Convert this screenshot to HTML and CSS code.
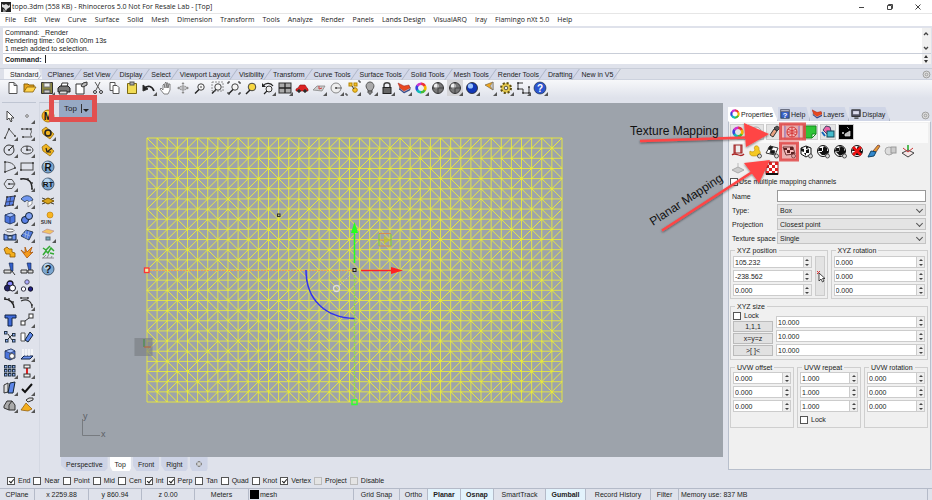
FILE: index.html
```html
<!DOCTYPE html>
<html lang="en">
<head>
<meta charset="utf-8">
<title>topo.3dm (558 KB) - Rhinoceros 5.0 Not For Resale Lab - [Top]</title>
<link rel="stylesheet" href="styles.css">
</head>
<body>
<header class="titlebar">
  <svg class="applogo" viewBox="0 0 10 10"><rect width="10" height="10" fill="#222"/><path d="M1 2l2 1 2-1 3 2 1-2v3L6 7 5 9 3 6 1 5z" fill="#ddd"/><path d="M2 7l2 1 1 2H2z" fill="#888"/></svg>
  <h1>topo.3dm (558 KB) - Rhinoceros 5.0 Not For Resale Lab - [Top]</h1>
  <div class="winbtns">
    <button aria-label="Minimize"><svg viewBox="0 0 8 8"><path d="M1 4.5h5"/></svg></button>
    <button aria-label="Restore"><svg viewBox="0 0 8 8"><path d="M1.500 2.500h4v4h-4zM2.500 2.500v-1h4v4h-1"/></svg></button>
    <button aria-label="Close"><svg viewBox="0 0 8 8"><path d="M1.500 1.500l5 5M6.500 1.500l-5 5"/></svg></button>
  </div>
</header>
<nav class="menubar">
  <a href="#">File</a><a href="#">Edit</a><a href="#">View</a><a href="#">Curve</a><a href="#">Surface</a><a href="#">Solid</a><a href="#">Mesh</a><a href="#">Dimension</a><a href="#">Transform</a><a href="#">Tools</a><a href="#">Analyze</a><a href="#">Render</a><a href="#">Panels</a><a href="#">Lands Design</a><a href="#">VisualARQ</a><a href="#">Iray</a><a href="#">Flamingo nXt 5.0</a><a href="#">Help</a>
</nav>
<section class="command">
  <div class="history">
    <div class="lines"><p>Command: _Render</p><p>Rendering time: 0d 00h 00m 13s</p><p>1 mesh added to selection.</p></div>
    <div class="scroll"><svg viewBox="0 0 8 25"><path d="M2 7l2-2 2 2M2 19l2 2 2-2" fill="none" stroke="#444" stroke-width="1.300"/></svg></div>
  </div>
  <div class="prompt"><label for="cmd">Command:</label><span class="caret"></span><input id="cmd" type="text">
    <div class="scroll"><svg viewBox="0 0 8 10"><path d="M2 4l2-3 2 3zM2 6l2 3 2-3z" fill="#333"/></svg></div>
  </div>
</section>
<nav class="tooltabs">
  <button class="on">Standard</button><button>CPlanes</button><button>Set View</button><button>Display</button><button>Select</button><button>Viewport Layout</button><button>Visibility</button><button>Transform</button><button>Curve Tools</button><button>Surface Tools</button><button>Solid Tools</button><button>Mesh Tools</button><button>Render Tools</button><button>Drafting</button><button>New in V5</button>
  <svg class="cog" viewBox="0 0 10 10"><circle cx="5" cy="5" r="3.800"/><circle cx="5" cy="5" r="1.500"/></svg>
</nav>
<div class="toolbar" data-icons="standard"></div>
<main class="work">
  <aside class="bar main-tools" data-icons="tools"></aside>
  <aside class="bar side-tools" data-icons="side"></aside>
  <section class="center">
    <div class="viewport">
      <div class="vplabel"><span>Top</span><button aria-label="Viewport menu"></button></div>
      <svg class="scene" viewBox="60 103 663 354" preserveAspectRatio="xMidYMid meet">
        <path id="grid" fill="none" stroke="#eeee35" stroke-width="1" stroke-opacity=".85"/>
        <path id="diagonals" fill="none" stroke="#f2f22c" stroke-width="1" stroke-opacity=".9"/>
        <rect x="134.500" y="338" width="18" height="18" fill="#777b80" fill-opacity=".6"/>
        <path d="M144 339v8" stroke="#3a8f3a"/><path d="M144 347h7" stroke="#c06030"/>
        <path d="M147 270.500h207" stroke="#f0a050" stroke-dasharray="2 1" stroke-width="1"/>
        <path d="M354.500 275v125" stroke="#8fdc50" stroke-width="1.300" stroke-dasharray="3 1"/>
        <path d="M354.500 263v-32" stroke="#2f2" stroke-width="1.500"/><path d="M354.500 222l3.500 11h-7z" fill="#2f2"/>
        <path d="M361 270.500h32" stroke="#f22" stroke-width="1.500"/><path d="M403 270.500l-12-3.500v7z" fill="#f22"/>
        <path d="M306 270c0 30 20 48 48.500 48.500" fill="none" stroke="#3232ee" stroke-width="1.500"/>
        <circle cx="336.500" cy="288.500" r="3" fill="none" stroke="#ddd" stroke-width="1.300"/>
        <path d="M340 285l11-11" stroke="#ccc" stroke-dasharray="2 2" stroke-width=".7"/>
        <rect x="353" y="268.500" width="3" height="3" fill="#bbb" stroke="#222"/>
        <rect x="277.500" y="214" width="2.500" height="2.500" fill="#bb9" stroke="#332"/>
        <rect x="144.500" y="268" width="4.500" height="4.500" fill="#eea" stroke="#f33" stroke-width="1.300"/>
        <rect x="352" y="400" width="5" height="4.500" fill="none" stroke="#3f3" stroke-width="1.500"/>
        <path d="M379 234v12M391 234v12" stroke="#88c850" stroke-width="1.500"/><path d="M379 233.500h12M379 246h12M379 240h12" stroke="#d88a50"/><path d="M384 236l6 4-6 4z" fill="#bcc040"/>
        <path d="M82.500 419v16.500H100" fill="none" stroke="#777b80"/>
        <text x="83" y="419">y</text><text x="101" y="437">x</text>
      </svg>
    </div>
    <nav class="vptabs"><button>Perspective</button><button class="on">Top</button><button>Front</button><button>Right</button><button aria-label="New viewport"><svg viewBox="0 0 8 8"><path d="M4 1v6M1 4h6" stroke="#888" stroke-width="2.500"/><path d="M4 2v4M2 4h4" stroke="#eee"/></svg></button></nav>
  </section>
  <aside class="panel">
    <nav class="ptabs" id="ptabs">
      <button class="on" data-glyph="wheel">Properties</button><button data-glyph="helpbook">Help</button><button data-glyph="layers">Layers</button><button data-glyph="monitor">Display</button>
      <svg class="cog" viewBox="0 0 10 10"><circle cx="5" cy="5" r="3.800"/><circle cx="5" cy="5" r="1.500"/></svg>
    </nav>
    <form class="props">
      <div class="pages" data-icons="pages"></div>
      <div class="maps" data-icons="maps"></div>
      <label class="check multi"><input type="checkbox">Use multiple mapping channels</label>
      <div class="fields">
        <label for="name">Name</label><input id="name" type="text">
        <label for="type">Type:</label><span class="drop"><select id="type"><option>Box</option></select></span>
        <label for="proj">Projection</label><span class="drop"><select id="proj"><option>Closest point</option></select></span>
        <label for="space">Texture space</label><span class="drop"><select id="space"><option>Single</option></select></span>
      </div>
      <div class="two">
        <fieldset><legend>XYZ position</legend>
          <div class="withpick">
            <div class="stack"><span class="spin"><input aria-label="Position X" value="105.232"></span><span class="spin"><input aria-label="Position Y" value="-238.562"></span><span class="spin"><input aria-label="Position Z" value="0.000"></span></div>
            <button type="button" class="pick" aria-label="Pick position"><svg viewBox="0 0 10 12"><path d="M1 1l3 3M4 1L1 4" stroke="#d33"/><path d="M3 3v8l2-2 1.500 3 1.500-1-1.500-2.500H9z" fill="#fff" stroke="#222" stroke-width=".8"/></svg></button>
          </div>
        </fieldset>
        <fieldset><legend>XYZ rotation</legend>
          <div class="stack"><span class="spin"><input aria-label="Rotation X" value="0.000"></span><span class="spin"><input aria-label="Rotation Y" value="0.000"></span><span class="spin"><input aria-label="Rotation Z" value="0.000"></span></div>
        </fieldset>
      </div>
      <fieldset class="size"><legend>XYZ size</legend>
        <div class="presets"><label class="check"><input type="checkbox">Lock</label><button type="button">1,1,1</button><button type="button">x=y=z</button><button type="button">&gt;[ ]&lt;</button></div>
        <div class="stack"><span class="spin"><input aria-label="Size X" value="10.000"></span><span class="spin"><input aria-label="Size Y" value="10.000"></span><span class="spin"><input aria-label="Size Z" value="10.000"></span></div>
      </fieldset>
      <div class="three">
        <fieldset><legend>UVW offset</legend>
          <div class="stack"><span class="spin"><input aria-label="Offset U" value="0.000"></span><span class="spin"><input aria-label="Offset V" value="0.000"></span><span class="spin"><input aria-label="Offset W" value="0.000"></span></div>
        </fieldset>
        <fieldset><legend>UVW repeat</legend>
          <div class="stack"><span class="spin"><input aria-label="Repeat U" value="1.000"></span><span class="spin"><input aria-label="Repeat V" value="1.000"></span><span class="spin"><input aria-label="Repeat W" value="1.000"></span></div>
          <label class="check"><input type="checkbox">Lock</label>
        </fieldset>
        <fieldset><legend>UVW rotation</legend>
          <div class="stack"><span class="spin"><input aria-label="Rotation U" value="0.000"></span><span class="spin"><input aria-label="Rotation V" value="0.000"></span><span class="spin"><input aria-label="Rotation W" value="0.000"></span></div>
        </fieldset>
      </div>
    </form>
  </aside>
  <svg class="callouts" viewBox="620 98 312 140">
    <defs><filter id="sh" x="-10%" y="-10%" width="120%" height="130%"><feDropShadow dx="0" dy="1" stdDeviation="1" flood-opacity=".5"/></filter></defs>
    <g fill="#e23b3b" fill-opacity=".35" stroke="#e04848" stroke-opacity=".85" stroke-width="3"><rect x="780.500" y="124" width="24" height="15"/><rect x="780.500" y="143" width="17" height="17"/></g>
    <g fill="#ff4545" stroke="#ff4545" filter="url(#sh)"><path d="M640 141l106-3.500" stroke-width="2.500"/><path d="M744 123l25 11-23 13z" stroke="none"/><path d="M662 230.500l91-59" stroke-width="2.500"/><path d="M744 163l26-3-11 23z" stroke="none"/></g>
    <text x="630" y="135">Texture Mapping</text>
    <text transform="translate(653 226) rotate(-33)">Planar Mapping</text>
  </svg>
</main>
<div class="osnap">
  <label class="check"><input type="checkbox" checked>End</label><label class="check"><input type="checkbox">Near</label><label class="check"><input type="checkbox">Point</label><label class="check"><input type="checkbox">Mid</label><label class="check"><input type="checkbox">Cen</label><label class="check"><input type="checkbox" checked>Int</label><label class="check"><input type="checkbox" checked>Perp</label><label class="check"><input type="checkbox">Tan</label><label class="check"><input type="checkbox">Quad</label><label class="check"><input type="checkbox">Knot</label><label class="check"><input type="checkbox" checked>Vertex</label><label class="check"><input type="checkbox" disabled>Project</label><label class="check"><input type="checkbox" disabled>Disable</label>
</div>
<footer class="status">
  <span>CPlane</span><span>x 2259.88</span><span>y 860.94</span><span>z 0.00</span><span>Meters</span><span class="layer"><i></i>mesh</span><button>Grid Snap</button><button>Ortho</button><button class="on">Planar</button><button class="on">Osnap</button><button>SmartTrack</button><button class="on">Gumball</button><button>Record History</button><button>Filter</button><span class="mem">Memory use: 837 MB</span>
</footer>
<script src="app.js"></script>
</body>
</html>
```
FILE: styles.css
```css
* { box-sizing: border-box; }
body { margin: 0; min-height: 100vh; display: flex; flex-direction: column; background: #dfe2eb; color: #222; font: 7px/9px "Liberation Sans", Arial, sans-serif; overflow: hidden; }
button, input, select { font: inherit; color: inherit; margin: 0; padding: 0; border: 0; background: none; border-radius: 0; outline: 0; }
svg { display: block; }
p, h1 { margin: 0; font-weight: normal; }

.titlebar { display: flex; align-items: center; height: 14px; background: #fff; border-bottom: 1px solid #e6e6e6; }
.applogo { width: 10px; height: 10px; margin: 0 1px 0 1px; }
.titlebar h1 { font: 7px/12px "Open Sans", sans-serif; flex: 1; }
.winbtns { display: flex; gap: 20px; padding-right: 10px; }
.winbtns svg { width: 8px; height: 8px; fill: none; stroke: #444; stroke-width: 1; }
.menubar { display: flex; gap: 8px; height: 12px; padding-left: 5px; background: #fff; font: 7px/12px "Open Sans", sans-serif; }
.menubar a { color: #222; text-decoration: none; white-space: nowrap; }

.command { margin: 2px 1px 4px 3px; }
.history { display: flex; background: #fff; border-bottom: 1px solid #c9ced8; }
.lines { flex: 1; padding: 1px 2px 0; line-height: 8px; }
.scroll { width: 9px; background: #f0f0f0; }
.scroll svg { width: 8px; }
.prompt { display: flex; align-items: center; height: 10px; background: #fff; padding-left: 2px; font-weight: bold; }
.prompt input { flex: 1; min-width: 0; }
.caret { width: 1px; height: 8px; margin-left: 3px; background: #222; }

.tooltabs { display: flex; height: 12px; padding-left: 4px; background: #dde0e9; border-top: 1px solid #c8cdd8; border-bottom: 1px solid #cdd2de; }
.tooltabs button { position: relative; background: #d3d8e9; padding: 0 4px 0 5px; white-space: nowrap; }
.tooltabs button::after { content: ""; position: absolute; z-index: 1; right: 0; top: 0; width: 1px; height: 11px; background: #aeb5c6; transform: skewX(-35deg); }
.tooltabs .on { background: #f6f7fa; padding-left: 6px; clip-path: polygon(0 0, 90% 0, 100% 100%, 0 100%); }
.cog { width: 9px; height: 9px; margin: 1px 1px 0 auto; fill: #ddd; stroke: #999; }

.ico { position: relative; width: 16px; height: 16px; flex: none; }
.ico svg { width: 16px; height: 16px; padding: 2px; overflow: visible; }
.ico.fly::after { content: ""; position: absolute; right: 0; bottom: 0; border: 2px solid; border-color: transparent #555 #555 transparent; }
.ico.hot { background: #d5d5d8; }
.toolbar { display: flex; gap: 1px; height: 18px; padding: 0 5px; background: linear-gradient(#f7f8fa, #dfe2eb); }

.work { position: relative; flex: 1; display: flex; }
.bar { align-content: start; display: grid; gap: 1px; padding-top: 5px; margin-top: 4px; border-top: 1px solid #bfc5d2; }
.main-tools { grid-template-columns: 16px 16px; width: 34px; margin-left: 2px; }
.side-tools { grid-template-columns: 16px; margin-left: 3px; padding-right: 4px; }
.side-tools { border-left: 1px solid #d4d8e2; }
.center { flex: 1; min-width: 0; display: flex; flex-direction: column; padding: 5px 0 2px; }
.viewport { position: relative; flex: 1; background: #9da3ab; }
.scene { position: absolute; inset: 0; width: 100%; height: 100%; }
.scene text { font: 9px "Liberation Sans", sans-serif; fill: #5c6066; }
.vplabel { position: absolute; z-index: 1; left: -11px; top: -8px; display: flex; gap: 4px; border: 5px solid #e2504f; background: linear-gradient(90deg, transparent 5px, #97a9c4 5px); font-size: 8px; line-height: 9px; padding: 4px 3px 4px 10px; }
.vplabel button { width: 8px; border-left: 1px solid #333; padding: 3px 0 0 1px; }
.vplabel button::after { content: ""; display: block; border: 3px solid transparent; border-top-color: #222; border-bottom: 0; }
.vptabs { display: flex; gap: 2px; height: 14px; margin-left: 1px; }
.vptabs button { background: #ced4e6; padding: 0 5px; clip-path: polygon(0 0, 100% 0, 100% 80%, 94% 100%, 14% 100%, 0 60%); }
.vptabs .on { background: #fff; }
.vptabs svg { width: 8px; }

.panel { display: flex; flex-direction: column; width: 209px; padding: 9px 1px 3px 5px; }
.ptabs { display: flex; height: 14px; }
.ptabs button { display: flex; align-items: center; gap: 1px; padding: 0 4px 0 2px; background: #cfd5e6; border-right: 1px solid #aeb5c6; clip-path: polygon(0 0, 88% 0, 100% 100%, 0 100%); }
.ptabs .on { background: #fff; }
.ptabs button svg { width: 10px; height: 10px; }
.ptabs .cog { margin-top: 4px; }
.props { flex: 1; background: #f0f0f0; border: 1px solid #b8bfcc; border-top-color: #fff; padding: 1px 2px 0 1px; }
.pages { display: flex; gap: 2px; height: 20px; padding-top: 1px; background: #fafafa; }
.pages .ico { border: 1px solid #ccc; background: #e4e4e4; }
.pages .ico svg { width: 14px; height: 14px; padding: 1px; }
.maps { display: grid; grid-template-columns: repeat(11, 16px); gap: 1px; }
.check { display: flex; align-items: center; gap: 3px; white-space: nowrap; }
.check input { appearance: none; width: 8px; height: 8px; background: #fff; border: 1px solid #555; position: relative; }
.check input:checked::after { content: ""; position: absolute; left: 2px; top: 0; width: 2px; height: 4px; border: solid #222; border-width: 0 1px 1px 0; transform: rotate(40deg); }
.check input:disabled { background: #e4e4e4; border-color: #bbb; }
.multi { padding-top: 1px; gap: 1px; }
.fields { display: grid; grid-template-columns: 45px 1fr; gap: 2px 0; padding: 4px 2px 0 2px; align-items: center; }
.fields > input, .drop, .fields select { height: 12px; width: 100%; }
.fields > input { background: #fff; border: 1px solid #999; }
.drop { position: relative; display: block; }
.drop select { display: block; appearance: none; background: #e4e4e4; border: 1px solid #c4c4c4; padding: 0 2px; }
.drop::after { content: ""; position: absolute; right: 4px; top: 3px; width: 4px; height: 4px; border: solid #555; border-width: 0 1px 1px 0; transform: rotate(45deg); }
fieldset { margin: 0; min-width: 0; padding: 0 2px 2px; border: 1px solid #cfcfcf; }
legend { padding: 0 2px; margin-left: 2px; line-height: 9px; white-space: nowrap; }
.two, .three { display: grid; gap: 3px; grid-template-columns: 1fr 1fr; }
.two { margin-top: 2px; }
.three { grid-template-columns: repeat(3, 1fr); }
.stack { display: grid; gap: 2px; flex: 1; min-width: 0; }
.spin { display: grid; grid-template: 5px 5px / 1fr 8px; background: #fff; border: 1px solid #ccc; height: 12px; }
.spin input { grid-row: 1 / 3; width: 100%; min-width: 0; padding-left: 1px; height: 10px; }
.spin button { background: #eee; border-left: 1px solid #ccc; display: grid; place-items: center; }
.spin button::after { content: ""; border: 2px solid transparent; border-top: 0; border-bottom-color: #444; }
.spin button:last-child::after { transform: scaleY(-1); }
.withpick { display: flex; gap: 3px; }
.pick { width: 10px; background: #e3e3e3; border: 1px solid #ccc; display: grid; align-items: center; }
.pick svg { width: 10px; height: 12px; overflow: visible; }
.two fieldset { padding-top: 1px; }
.size { display: flex; gap: 3px; margin: 3px 0; padding-bottom: 3px; }
.size .stack { padding-top: 5px; }
.presets { display: grid; gap: 1px; width: 40px; }
.presets button { background: #e1e1e1; border: 1px solid #bbb; height: 11px; line-height: 9px; }
.three .check { padding: 3px 0 1px; }
.callouts { position: absolute; right: 0; top: 0; width: 312px; height: 140px; pointer-events: none; z-index: 2; overflow: visible; }
.callouts text { font: 12px "Liberation Sans", sans-serif; fill: #111; }

.osnap { display: flex; gap: 3px; height: 15px; padding-left: 7px; align-items: center; }
.status { display: grid; grid-template-columns: 35px 54px 53px 53px 54px 105px 46px 28px 33px 33px 52px 40px 65px 28px 1fr; height: 12px; border-top: 1px solid #b4bac8; line-height: 11px; text-align: center; }
.status > * { border-right: 1px solid #b4bac8; white-space: nowrap; }
.status .on { background: #e3f3fc; font-weight: bold; }
.status .layer { display: flex; align-items: center; gap: 1px; padding-left: 1px; }
.layer i { width: 9px; height: 9px; background: #000; }
.status .mem { text-align: left; padding-left: 2px; margin-right: 4px; }
```
FILE: app.js
```js
const P = (d, fill = 'none', stroke = '#333', w = 1) => `<path d="${d}" fill="${fill}" stroke="${stroke}" stroke-width="${w}"/>`;
const C = (x, y, r, fill = 'none', stroke = '#333', w = 1) => `<circle cx="${x}" cy="${y}" r="${r}" fill="${fill}" stroke="${stroke}" stroke-width="${w}"/>`;
const R = (x, y, w, h, fill = 'none', stroke = '#333') => `<rect x="${x}" y="${y}" width="${w}" height="${h}" fill="${fill}" stroke="${stroke}"/>`;
const T = (x, y, s, size, fill = '#111') => `<text x="${x}" y="${y}" font-size="${size}" font-weight="bold" text-anchor="middle" fill="${fill}" font-family="Liberation Sans">${s}</text>`;
const dots = (list, fill = '#333') => list.map(([x, y]) => C(x, y, .9, fill, 'none')).join('');

// Six coloured arcs that close into a ring.
const wheel = ['#e33', '#f7b500', '#4b3', '#1bb', '#34d', '#c3c'].map((c, i) =>
  `<circle cx="6" cy="6" r="4.300" fill="none" stroke="${c}" stroke-width="2.600" stroke-dasharray="4.700 40" transform="rotate(${i * 60 - 90} 6 6)"/>`).join('');
const layers = P('M1 7l5 4 6-3V5z', '#24c', '#124', .5) + P('M1 6l5 4 6-3V5z', '#fff', '#444', .5) + P('M0 1l2 5 4 3 6-3-1-3-5 1z', '#e8481f', '#922', .5);
const lens = (extra = '') => C(7, 5, 3.2, '#f4f4f4', '#444') + P('M5 7.500l-4 4', 'none', '#222', 1.500) + extra;
const coin = s => C(6, 6, 6, '#f4b51c', '#9a6a00', .8) + C(5, 4, 3, '#ffe06a', 'none') + s;
const blue = s => C(6, 6, 6, '#7aa5cf', '#345', .8) + C(5, 3.500, 3, '#b9d6ef', 'none') + s;
const tag = s => P('M0 3l4-3 8 7-4 5-7-5z', '#f0b420', '#8a6200', .7) + s;
const sphere = (a, b) => C(6, 6, 5.5, b, '#222', .8) + C(4.500, 4, 2.600, a, 'none');
const checks = (c = '#111') => {
  let s = '';
  for (let i = 0; i < 4; i++) for (let j = 0; j < 4; j++) if ((i + j) % 2) s += `<rect x="${i * 3}" y="${j * 3}" width="3" height="3" fill="${c}"/>`;
  return s;
};
const ball = c => `<g>${C(6, 6, 5.500, '#fff', c, 1)}${P('M2 3h3v3H1zM7 1l3 2v3H6V3zM5 6h3v4H5zM8 6h3v2L8 10zM2 7l3 0v3z', c, 'none')}</g>`;
const lensSmall = C(10.500, 11, 2, '#ddd', '#333', .8);
const box = P('M1 3l6-2 4 2v7l-5 2-5-2z', '#4b74dd', '#124', .7) + P('M1 3l5 2 5-2-4-2z', '#a9c4ff', '#124', .6) + P('M6 5v7', 'none', '#124', .6);
const cell = (x, y) => R(x + .5, y + .5, 2.500, 2.500, '#8fb0f5', '#234');

const sets = {
  standard: [
    ['New', P('M2 .5h5l3 3v8H2zM7 .5v3h3', '#fff', '#555')],
    ['Open', P('M0 10V2h4l1 1h5v2', '#e8a51c', '#85600a') + P('M0 10l3-5h9l-3 5z', '#ffd44d', '#85600a', .8)],
    ['Save', P('M.5.5h11v11H.5z', '#8c8740', '#333') + R(3, 1, 6, 4, '#eee', '#777') + R(3, 8, 6, 3, '#ccc', '#555'), 1],
    ['Print', P('M3 5l1-4h6L9 5', '#fff') + P('M0 6l2-2h8l2 2v4H0z', '#777', '#222') + P('M2 9h7v3H1z', '#ddd')],
    ['Document properties', P('M1 2h8v10H1z', '#fff') + P('M6 4l2-3 4-1v3L8 5z', '#bbb')],
    ['Cut', P('M3 0l5 8M8 0L4 8', 'none', '#555') + C(3, 10, 1.5) + C(9, 10, 1.5)],
    ['Copy', P('M1 .5h5v8H1z', '#fff', '#555') + P('M4 3.500h4l2 2v6H4z', '#fff', '#555')],
    ['Paste', P('M1.500 1.500h9v10h-9z', '#f1dc55', '#7d6a12') + R(4, 0, 4, 3, '#aaa', '#555')],
    ['Undo', P('M2 6c3-3 7-2 9 3', 'none', '#222', 1.800) + P('M0 3v6l5-2z', '#222'), 1],
    ['Pan', P('M4 12L0 7l1-1 2 2V3l1-1 1 4V1l1-1 1 6V1l1 0 0 5 1-4 1 0v6l-2 4z', '#fff', '#666', .8)],
    ['Rotate view', P('M6 1v10M1 6h10', 'none', '#888', .8) + '<ellipse cx="6" cy="6" rx="4" ry="2" fill="none" stroke="#888" stroke-width=".8"/>' + P('M6 0l1.500 2h-3zM6 12l1.500-2h-3zM12 6l-2-1.500v3zM0 6l2-1.500v3z', '#888', 'none')],
    ['Zoom', lens(P('M7 4v2', 'none', '#444'))],
    ['Zoom window', lens() + '<rect x="1" y="0" width="11" height="9" fill="none" stroke="#777" stroke-width=".8" stroke-dasharray="2 1"/>'],
    ['Zoom extents', lens() + P('M0 2V0h2M10 0h2v2M12 10v2h-2M2 12H0v-2', 'none', '#222')],
    ['Zoom selected', C(7, 5, 3.800, '#f7d742', '#444') + P('M5 8l-4 4', 'none', '#222', 1.500)],
    ['Undo view', C(7, 7, 3, '#eee') + P('M5 9l-3 3M1 4c3-4 8-3 10 0', 'none', '#222', 1.200) + P('M0 1v4h4z', '#222', 'none'), 1],
    ['Four viewports', R(0, 1, 12, 10, '#aaa') + P('M6 1v10M0 6h12', 'none', '#222', 1.300), 1],
    ['Right view', P('M0 7l2-1 2-3h5l2 3 1 1v2H0z', '#d22', '#811', .6) + C(3, 9, 1.300, '#222') + C(9, 9, 1.300, '#222')],
    ['Construction plane', P('M0 8l4-4h8l-3 5z', '#ccc', '#888', .8) + P('M6 7l3-1M6 7V4', 'none', '#c44'), 1],
    ['Object snap', C(6, 6, 5, '#eee', '#888') + P('M6 6h6', 'none', '#666') + dots([[6, 6]]), 1],
    ['Select', R(2, 1, 3, 3, '#f7c22c', '#b58500') + R(7, 1, 3, 3, '#f7c22c', '#b58500') + C(8, 8, 2.300, '#f7c22c', '#b58500') + P('M11 -1h2v2M1 13h-2v-2M5 4l2 3', 'none', '#333'), 1],
    ['Hide', P('M4 8C0 4 3 0 6 0s6 4 2 8v3H4z', '#aaa', '#555') + P('M4 9h4M5 12h2', 'none', '#333'), 1],
    ['Lock', P('M3 6V3c0-3 6-3 6 0v3', 'none', '#444', 1.500) + R(2, 5.500, 8, 6, '#666', '#222'), 1],
    ['Layers', layers, 1], ['Properties', wheel, 1],
    ['Wireframe', sphere('#eee', '#777') + P('M6 0v12M0 6h12', 'none', '#222', .6)],
    ['Shaded', sphere('#eee', '#777') + P('M6 0v12M0 6h12', 'none', '#222', .6), 1, 'hot'],
    ['Render', sphere('#9cc4ff', '#1238b8'), 1],
    ['Spotlight', P('M2 3l8-3v8z', '#f3a81d', '#764', .7) + P('M10 0v8L7 4z', '#ccc', '#666', .5), 1],
    ['Options', '<circle cx="6" cy="6" r="4.800" fill="#e0c23a" stroke="#5f5010" stroke-width="2.400" stroke-dasharray="2 1.770"/>' + C(6, 6, 3.800, '#e8cc50', 'none') + C(6, 6, 1.800, '#eee', '#554'), 1],
    ['Dimension', P('M1 1h5M1 1v6h5v4h6V5', 'none', '#333', 1) + dots([[1, 1], [1, 7], [6, 11], [12, 11], [12, 5]]), 1],
    ['Help', C(6, 6, 6, '#2c55cf', '#123', .6) + T(6, 10, '?', 10, '#fff'), 1]
  ],
  tools: [
    ['Cancel', P('M3 1v9l2-2 2 4 1-1-1-3h3z', '#fff', '#444')], ['Point', C(6, 6, 1.300, '#fff', '#555', .8), 1],
    ['Polyline', P('M1 11L5 2l6 7', 'none', '#555') + dots([[1, 11], [5, 2], [11, 9]]), 1], ['Curve', P('M1 2h8c4 4-2 4 2 8H2', 'none', '#555') + dots([[1, 2], [6, 2], [10, 2], [2, 10]]), 1],
    ['Circle', C(5, 6, 5) + P('M5 6l4-4') + dots([[5, 6], [9, 2]]), 1], ['Ellipse', '<ellipse cx="6" cy="6" rx="6" ry="4" fill="none" stroke="#444"/>' + P('M6 6V2M6 6h4') + dots([[6, 6]]), 1],
    ['Arc', P('M1 1c8 0 10 4 10 6L1 11z', 'none', '#555') + dots([[1, 1], [1, 11], [11, 7]]), 1], ['Rectangle', R(0, 2, 12, 7, 'none', '#444') + dots([[0, 9], [12, 2]]), 1],
    ['Polygon', P('M3 1.500h5L11 6 8 10.500H3L0 6z', 'none', '#555') + P('M5 6h5') + dots([[5, 6]]), 1], ['Fillet', P('M0 1c8-1 11 3 11 10', 'none', '#222', 1.500) + dots([[0, 1], [7, 1], [11, 5], [11, 11]]), 1],
    ['Surface', P('M3 2l8-1-2 9-8 1z', '#5b82e8', '#223', .8) + P('M7 1L5 11M2 7l8-1', 'none', '#223', .6) + dots([[3, 2], [11, 1], [9, 10], [1, 11]]), 1], ['Revolve', P('M0 4c4-5 10-4 12 1L8 7C7 5 5 5 4 7z', '#6f96ef', '#234', .8) + P('M7 7v5l4-3V6', '#fff', '#555', .6), 1],
    ['Box', box, 1], ['Boolean', C(4, 8, 3.500, '#5a80e6', '#123') + C(8, 4, 3.500, '#7ea0f2', '#123'), 1],
    ['Project', '<ellipse cx="6" cy="1.500" rx="4" ry="1.500" fill="#fff" stroke="#666"/>' + P('M0 5c4 2 8 2 12 0v6H0z', '#6d93ee', '#124') + R(4, 7, 4, 3, '#cde', '#234'), 1], ['Mesh', P('M0 7l5-6 7 2-4 8z', '#4f78dd', '#123', .8) + P('M2 4l7 3M5 1L4 9M8 2L6 10', 'none', '#bcd', .6), 1],
    ['Join', P('M0 3l3-2 2 2 3 0v3l3 1 0 4H6V8H2z', '#f3ae1e', '#8a5500', .8)], ['Explode', P('M6 12L0 4l4 3V1l2 5 5-5-2 6 3-1z', '#f49a1c', '#a34b00', .7)],
    ['Trim', P('M5 0h4v8H7z', '#335fcb', '#124', .6) + P('M0 7h7v3H0zM8 8l3 4', '#ddd', '#333')], ['Split', P('M6 0h4v8H8z', '#335fcb', '#124', .6) + P('M0 7h6v3H0zM7 7h5v3H7z', '#ddd', '#333')],
    ['Group', C(6, 4, 3, '#88f', '#112', 1.300) + C(3.500, 8, 3, '#226', '#112') + C(8.500, 8, 3, '#fff', '#112'), 1], ['Ungroup', C(6, 2, 2.200, '#aaf', '#556') + C(2.500, 9, 2.200, '#fff', '#334') + C(9.500, 9, 2.200, '#228', '#112')],
    ['Edit points', P('M0 2c6 0 10 4 10 9', 'none', '#222', 1.500) + dots([[1, 1], [5, 2], [9, 5]])], ['Curve tools', P('M0 4c7-3 11 1 11 7M0 1h7', 'none', '#333', 1.200) + dots([[0, 1], [7, 1], [11, 8]]), 1],
    ['Text', P('M1 1h11v3H8v8H4V4H1z', '#3f6ad8', '#124')], ['Move', R(0, 7, 4, 4, '#fff') + R(8, 0, 4, 4, '#fff') + P('M4 7l4-3'), 1],
    ['Copy objects', cell(0, 0) + cell(8, 2) + cell(1, 8) + cell(8, 8) + P('M4 3l4 6M8 4L4 8')], ['Rotate', P('M0 2h4v8H0z', '#fff', '#555') + P('M9 1l3 3-5 7-3-2z', '#5d86e8', '#123')],
    ['Solid tools', box + C(8, 8, 2.500, '#fff', '#555')], ['Extrude', P('M0 11l3-3h9l-3 3z', '#6d93ee', '#124') + P('M2 8V1M5 8V1M8 8V1M11 7V1', 'none', '#fff', 1.200), 1],
    ['Array', [0, 4, 8].map(x => [0, 4, 8].map(y => cell(x, y)).join('')).join(''), 1], ['Align', P('M6 0v12', 'none', '#d22', 2) + R(3, 0, 6, 3, '#eee') + R(3, 9, 6, 3, '#eee'), 1],
    ['Analyze', P('M0 3l4-2v9l-4 1z', '#ddd', '#333') + P('M6 1l5-1-2 11H4z', '#5d86e8', '#123'), 1], ['Check', P('M1 7l3 3 7-8', 'none', '#111', 2), 1],
    ['Block', P('M0 7l3-5 5 0 3 4v5H5l-5-2z', '#aaa', '#333') + P('M5 11V6l3-4', 'none', '#333'), 1], ['Render tools', P('M0 11l5-7 6 6-4 2z', '#f3ae1e', '#8a5500', .7) + P('M5 1l3-2 4 0v2L7 3z', '#ddd', '#333'), 1]
  ],
  side: [
    ['Materials', coin(T(6, 10, 'M', 10))], ['Tag ring', tag(C(6, 6, 3, 'none', '#222', 1.600)), 1], ['Tag arrow', tag(P('M4 4l1 4h4M5 8l5-4', 'none', '#222', 1.200))],
    ['Render', blue(T(6, 10, 'R', 10))], ['Real time', blue(T(6, 9, 'RT', 8))],
    ['Sky', P('M0 6l6-3 6 3-6 3z', '#d9a51e', '#7a5500') + P('M0 3l3 1M12 3L9 4M0 9l3-1M12 9L9 8', 'none', '#444')],
    ['Sun', C(8, 3, 3, '#f9b420', '#b87900', .6) + T(4, 12, 'SUN', 5, '#333')],
    ['Ground', P('M0 3l5-3 7 2-4 3z', '#f2c464', '#a78', .5) + R(4, 8, 4, 3, '#7ab', '#567'), 1],
    ['Plants', P('M1 9l3-4 2 2 3-5 3 3M1 2l3 2 4-4M8 7l4 1', 'none', '#3a3', 1.500) + P('M1 12l3-3M5 12l2-4M9 12l1-2M0 12h12', 'none', '#777', .8)], ['Help', blue(T(6, 10, '?', 11))]
  ],
  pages: [
    ['Object', wheel], ['Material', C(6, 6, 5, '#f8f8f8', '#aaa')], ['Spotlight', P('M2 9l4-6 3 2-4 6z', '#e8a080', '#333') + P('M6 2l3-2 3 2-3 3z', '#555', '#333')],
    ['Texture mapping', P('M-1 0v12M13 0v12', 'none', '#8af', 1.500) + C(6, 6, 5, '#fff', '#c33') + P('M6 1v10M1 6h10M2 3c3 2 5 2 8 0M2 9c3-2 5-2 8 0', 'none', '#c33')],
    ['Ground', P('M0 0h12v8l-4 4H0z', '#2fc437', '#178a1e') + P('M12 8l-4 4V8z', '#fff', '#178a1e')],
    ['Decals', P('M1 4l3-4 4 1 1 4-4 3z', '#e6a', '#446') + R(5, 5, 7, 6, '#4bc', '#145') + P('M0 6l3 4', 'none', '#16b', 2)],
    ['Thickness', '<rect x="-1" y="-1" width="14" height="14" fill="#000"/>' + P('M5 8l5-3v5H5zM7 1l2 2', '#bbb', '#ddd', .7) + C(3, 7, 1, '#ddd', 'none')]
  ],
  maps: [
    ['Unwrap', R(2, 0, 8, 8, '#eee', '#922') + P('M0 10c4-4 8 4 12-1M3 0v8M9 0v8', 'none', '#a22', 1.300)],
    ['Duck', P('M1 6c3 2 4 0 5-1-3-5 5-6 4 0 4 5-2 6-5 6S0 10 1 6z', '#f5c823', '#b98a00', .6) + lensSmall],
    ['Surface mapping', P('M0 8l4-7 8 2-3 7z', '#fff') + P('M4 1l3 1-2 3-3-1zM5 5l4 1-1 3-4-1z', '#111') + lensSmall],
    ['Planar mapping', P('M0 2l10 0 2 7-9 1z', '#fff') + P('M1 3h3v2H1zM7 2h3v3H7zM4 5h3v3H4zM8 7h3v2H8z', '#111', 'none') + lensSmall],
    ['Box mapping', P('M1 3l5-2 5 2v6l-5 3-5-3z', '#fff', '#111') + P('M1 3l3 1v3l-3-1zM6 1l3 2-3 1zM6 5l3-1v4H6zM4 8h2v3z', '#111', 'none') + lensSmall],
    ['Spherical mapping', ball('#111') + lensSmall], ['Cylindrical mapping', ball('#111') + P('M0 6h12M6 0v12', 'none', '#111') + lensSmall],
    ['Delete mapping', ball('#111') + P('M2 2l8 8M10 2l-8 8', 'none', '#e11', 2.600)],
    ['Match mapping', P('M5 6l5-6 2 1-4 6z', '#e89a30', '#854') + P('M0 12l3-6 5 1-2 4z', '#38c', '#146')],
    ['Custom mapping', C(4, 6, 4, '#ddd', '#aaa') + R(6, 2, 5, 6, '#ccc', '#999')],
    ['Show mapping', P('M6 5V0', 'none', '#2a2', 1.500) + P('M0 8l6-3 6 3-6 4z', '#f5e8e8', '#444') + P('M6 7l5-4M6 7L1 3', 'none', '#c33')],
    ['Hide mapping', P('M0 8l6-3 6 3-6 3z', '#ccc', '#aaa') + P('M6 5V1', 'none', '#bbb')], ['Spacer', ''],
    ['UV editor', R(0, 0, 12, 12, '#fff', '#a11') + checks('#d22') + P('M0 12h12', 'none', '#111', 2)]
  ]
};

document.querySelectorAll('[data-icons]').forEach(el => {
  el.innerHTML = sets[el.dataset.icons].map(([name, art, fly, cls]) =>
    `<button type="button" class="ico ${fly ? 'fly' : ''} ${cls || ''}" aria-label="${name}"><svg viewBox="0 0 12 12">${art}</svg></button>`).join('');
});

const glyphs = {
  wheel, layers,
  helpbook: R(1, 1, 10, 10, '#3a62c8', '#234') + R(1, 1, 10, 2, '#ccd', '#667') + T(6, 11, '?', 9, '#fff'),
  monitor: R(1, 1, 10, 8, '#556', '#222') + R(2, 2, 8, 5, '#dde', '#445') + P('M4 11h5', 'none', '#333', 1.500)
};
document.querySelectorAll('[data-glyph]').forEach(b => {
  b.insertAdjacentHTML('afterbegin', `<svg viewBox="0 0 12 12">${glyphs[b.dataset.glyph]}</svg>`);
});
document.querySelectorAll('.spin').forEach(s => {
  s.insertAdjacentHTML('beforeend', '<button type="button" aria-label="Increase"></button><button type="button" aria-label="Decrease"></button>');
});

// Terrain mesh: a 41 x 26 grid whose quads are split along either diagonal.
const x0 = 147, y0 = 138, cols = 41, rows = 26, w = 415 / cols, h = 264 / rows;
let lines = '', diag = '', seed = 7;
for (let i = 0; i <= cols; i++) lines += `M${x0 + i * w} ${y0}v264`;
for (let j = 0; j <= rows; j++) lines += `M${x0} ${y0 + j * h}h415`;
for (let j = 0; j < rows; j++) for (let i = 0; i < cols; i++) {
  seed = (seed * 16807) % 2147483647;
  const alternate = (i + j) % 2 === 0;
  const rising = seed / 2147483647 < .4 ? !alternate : alternate;
  const x = x0 + i * w, y = y0 + j * h;
  diag += rising ? `M${x} ${y + h}l${w} ${-h}` : `M${x} ${y}l${w} ${h}`;
}
document.getElementById('grid').setAttribute('d', lines);
document.getElementById('diagonals').setAttribute('d', diag);
```
